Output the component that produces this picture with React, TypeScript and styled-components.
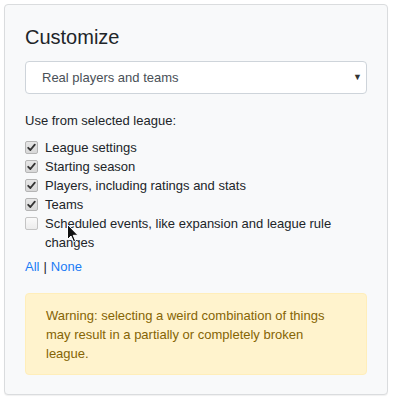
import React, { useState } from "react";
import styled, { createGlobalStyle } from "styled-components";

const Global = createGlobalStyle`
  html, body { margin: 0; padding: 0; background: #ffffff; }
  body { font-family: "Liberation Sans", Arial, sans-serif; font-size: 13px; line-height: 19px; color: #212529; }
  * { box-sizing: border-box; }
`;

const Page = styled.div`
  padding: 4px 5px 5px 4px;
  position: relative;
`;

const Card = styled.div`
  background: #f8f9fa;
  border: 1px solid #dadcde;
  border-radius: 4px;
  padding: 20px 20px 19px;
  box-shadow: 0 1px 1px rgba(0, 0, 0, 0.06);
`;

const Title = styled.h2`
  margin: 0 0 12px;
  font-size: 20px;
  font-weight: 400;
  line-height: 24px;
  color: #212529;
`;

const SelectBox = styled.div`
  position: relative;
  height: 33px;
  background: #fff;
  border: 1px solid #ced4da;
  border-radius: 4px;
  display: flex;
  align-items: center;
  padding: 0 16px;
  color: #495057;
  margin-bottom: 17px;
`;

const SelectText = styled.span`
  flex: 1;
`;

const Caret = styled.span`
  font-size: 9px;
  color: #333;
  margin-right: -12px;
`;

const Label = styled.div`
  margin-bottom: 8px;
`;

const List = styled.div`
  display: flex;
  flex-direction: column;
  margin-bottom: 5px;
`;

const Row = styled.label`
  display: flex;
  align-items: flex-start;
  gap: 7px;
`;

const Box = styled.span<{ $checked: boolean }>`
  flex: none;
  width: 13px;
  height: 13px;
  margin-top: 3px;
  border-radius: 2px;
  border: 1px solid ${(p) => (p.$checked ? "#b5b5b5" : "#c4c4c4")};
  background: ${(p) => (p.$checked ? "linear-gradient(#e6e6e6, #d8d8d8)" : "linear-gradient(#fafafa, #ececec)")};
  display: flex;
  align-items: center;
  justify-content: center;
`;

const Links = styled.div`
  display: flex;
  gap: 4px;
  margin-bottom: 17px;
`;

const Link = styled.a`
  color: #1a7cf5;
  text-decoration: none;
`;

const Alert = styled.div`
  background: #fff3cd;
  border: 1px solid #ffeeba;
  border-radius: 4px;
  color: #856404;
  padding: 12px 40px 11px 20px;
`;

const Cursor = styled.svg`
  position: absolute;
  left: 67px;
  top: 224px;
  pointer-events: none;
`;

const items = [
  { label: "League settings", checked: true },
  { label: "Starting season", checked: true },
  { label: "Players, including ratings and stats", checked: true },
  { label: "Teams", checked: true },
  { label: "Scheduled events, like expansion and league rule changes", checked: false },
];

export default function App() {
  const [state] = useState(items);
  return (
    <Page>
      <Global />
      <Card>
        <Title>Customize</Title>
        <SelectBox>
          <SelectText>Real players and teams</SelectText>
          <Caret>▼</Caret>
        </SelectBox>
        <Label>Use from selected league:</Label>
        <List>
          {state.map((it) => (
            <Row key={it.label}>
              <Box $checked={it.checked}>
                {it.checked && (
                  <svg width="9" height="9" viewBox="0 0 9 9">
                    <path d="M1.2 4.8 L3.4 7 L7.8 1.6" fill="none" stroke="#333" strokeWidth="1.8" strokeLinecap="round" strokeLinejoin="round" />
                  </svg>
                )}
              </Box>
              <span>{it.label}</span>
            </Row>
          ))}
        </List>
        <Links>
          <Link href="#">All</Link>
          <span>|</span>
          <Link href="#">None</Link>
        </Links>
        <Alert>
          Warning: selecting a weird combination of things may result in a partially or completely broken league.
        </Alert>
      </Card>
      <Cursor width="12" height="19" viewBox="0 0 12 19">
        <path d="M0.5 0.5 L0.5 15.5 L4 12 L6.5 17.8 L8.6 16.9 L6.2 11.3 L11 11.3 Z" fill="#111" stroke="#fff" strokeWidth="1" strokeLinejoin="round" />
      </Cursor>
    </Page>
  );
}
